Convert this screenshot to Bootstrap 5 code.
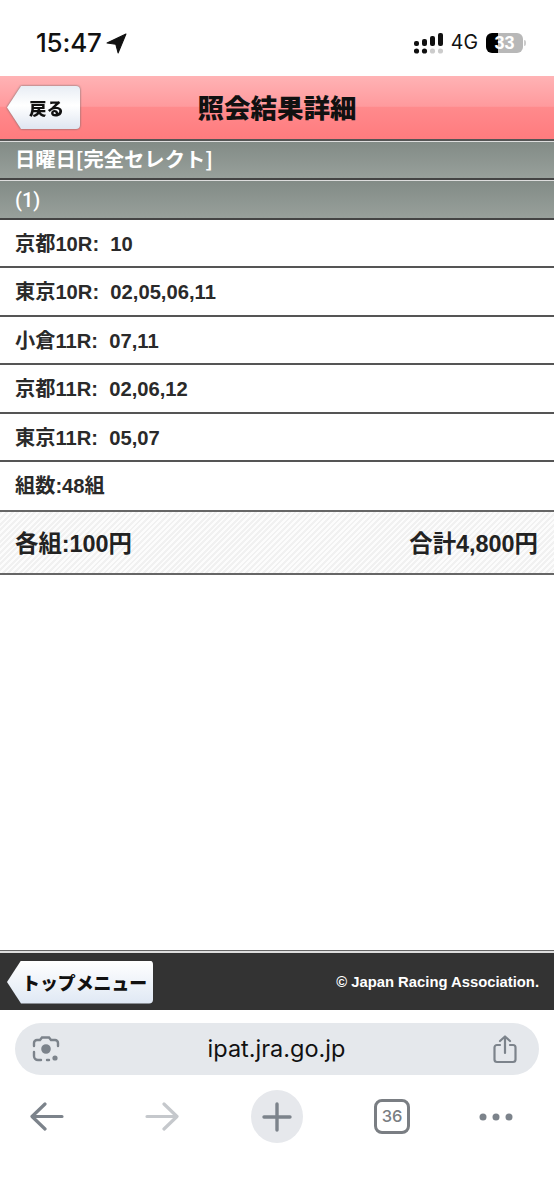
<!DOCTYPE html>
<html lang="ja"><head><meta charset="utf-8">
<link href="https://cdn.jsdelivr.net/npm/bootstrap@5.3.0/dist/css/bootstrap.min.css" rel="stylesheet">
<style>
html,body{height:1200px;overflow:hidden}
body{background:#fff;font-family:"Liberation Sans","Noto Sans CJK JP",sans-serif;color:#222}
.page-wrap{height:1200px}
.status-bar{height:76px;padding:24px 28px 0 36px;color:#111}
.clock{font:500 26px/38px Inter,"Liberation Sans",sans-serif;letter-spacing:-.2px}
.net{font:400 19.500px/1 Inter,"Liberation Sans",sans-serif;margin:0 8px}
.batt{width:37px;height:20px;border-radius:6px;background:linear-gradient(90deg,#000 32%,#b8b8b8 32%);color:#fff;font:700 18px/20px "Liberation Sans",sans-serif;text-align:center}
.batt-tip{width:2px;height:6px;background:#ccc;border-radius:0 2px 2px 0;margin-left:1px}
.red-head{height:65px;background:linear-gradient(#ffb3b5 0,#ff9a9d 48%,#ff8a8c 50%,#ff7b7e 100%);border-bottom:2px solid #555;padding-left:7px}
.head-title{font:900 26.500px/1 "Noto Sans CJK JP",sans-serif;color:#111;left:0;right:0;top:18px;text-align:center}
.head-back{filter:drop-shadow(0 0 1px #666)}
.head-back-in{width:73px;height:43px;background:linear-gradient(#e8edf4,#fff 45%,#dfe6f1);clip-path:path("M14 0H69a4 4 0 0 1 4 4V39a4 4 0 0 1-4 4H14L0 21.500Z");font:900 17.500px/43px "Noto Sans CJK JP",sans-serif;color:#111;padding-left:6px;text-align:center}
.band{height:39px;background:linear-gradient(#828b86,#98a09b);border-top:1px solid #ddd;border-bottom:2px solid #444;color:#fff;font:700 20.300px/33px "Noto Sans CJK JP","Liberation Sans",sans-serif;padding-left:15px}
.band-num{height:40px;line-height:38px;font-family:Roboto,"Liberation Sans",sans-serif;font-weight:500;font-size:20px}
.data-list .list-group-item{height:48.400px;border:0;border-bottom:2px solid #555;padding:0 15px;font:700 20.200px/48px "Liberation Sans","Noto Sans CJK JP",sans-serif;color:#2a2a2a;border-radius:0;margin:0}
.data-list .list-group-item:last-child{border-bottom:0;line-height:48px}
.sum-bar{height:65px;border-top:2px solid #666;border-bottom:2px solid #666;padding:3px 16px 0 15px;font:700 23.400px/1 "Liberation Sans","Noto Sans CJK JP",sans-serif;color:#222;background-color:#fafafa;background-image:repeating-linear-gradient(135deg,#f1f1f1 0 2px,#fcfcfc 2px 4px)}
.foot-bar{height:60px;background:#333;border-top:1px solid #666;box-shadow:inset 0 2px 0 #ddd;padding:3px 15px 0 7px;color:#fff;font:700 14.800px/1 "Liberation Sans",sans-serif}
.foot-top{width:146px;height:43px;background:linear-gradient(#fff,#dfe8f4);clip-path:path("M14 0H142a4 4 0 0 1 4 4V39a4 4 0 0 1-4 4H14L0 21.500Z");font:900 17.900px/43px "Noto Sans CJK JP",sans-serif;color:#111;padding-left:15px;white-space:nowrap;text-align:left}
.addr-bar{height:52px;margin:13px 15px 0;border-radius:26px;background:#e5e8ec;padding:0 22px 0 17px;font:400 23.500px/1 Inter,"Liberation Sans",sans-serif;color:#111}
.tool-row{height:125px;padding-top:15px}
.tool-in{height:53px}
.t-back{margin-left:30px}
.t-fwd{margin-left:81px}
.t-plus{margin-left:72px}
.t-tab{margin-left:71px}
.t-more{margin-left:69px}
.plus-wrap{width:52px;height:53px;border-radius:50%;background:#e6e8ec}
.tab-count{width:36px;height:35px;border:3.500px solid #7a7e83;border-radius:8px;font:500 16.500px/1 Inter,"Liberation Sans",sans-serif;color:#7a7e83}
</style></head>
<body>
<div class="page-wrap d-flex flex-column">
  <div class="status-bar d-flex justify-content-between align-items-start">
    <div class="d-flex align-items-center gap-1"><span class="clock">15:47</span>
      <svg width="21" height="21" viewBox="0 0 20 20"><path d="M19 1 1 9.500l8.300 1.200L11.500 19z" fill="#111" stroke="#111" stroke-linejoin="round"/></svg></div>
    <div class="d-flex align-items-center" style="height:38px">
      <svg width="29" height="21" viewBox="0 0 29 21" fill="#111"><rect x="0" y="8" width="5" height="5" rx="2"/><rect x="8" y="6" width="5" height="7" rx="2"/><rect x="16" y="3" width="5" height="10" rx="2"/><rect x="24" y="0" width="5" height="13" rx="2"/><circle cx="2.500" cy="18" r="2.600"/><circle cx="10.500" cy="18" r="2.600"/><circle cx="18.500" cy="18" r="2.600" fill="#ccc"/><circle cx="26.500" cy="18" r="2.600" fill="#ccc"/></svg>
      <span class="net">4G</span>
      <div class="batt">33</div><div class="batt-tip"></div>
    </div>
  </div>
  <div class="red-head position-relative d-flex align-items-center">
    <div class="head-back"><div class="head-back-in">戻る</div></div>
    <div class="head-title position-absolute">照会結果詳細</div>
  </div>
  <div class="band">日曜日[完全セレクト]</div>
  <div class="band band-num">(1)</div>
  <ul class="list-group data-list">
    <li class="list-group-item">京都10R:&nbsp; 10</li>
    <li class="list-group-item">東京10R:&nbsp; 02,05,06,11</li>
    <li class="list-group-item">小倉11R:&nbsp; 07,11</li>
    <li class="list-group-item">京都11R:&nbsp; 02,06,12</li>
    <li class="list-group-item">東京11R:&nbsp; 05,07</li>
    <li class="list-group-item">組数:48組</li>
  </ul>
  <div class="sum-bar d-flex justify-content-between align-items-center"><span>各組:100円</span><span>合計4,800円</span></div>
  <div class="flex-grow-1"></div>
  <div class="foot-bar d-flex justify-content-between align-items-center">
    <div class="foot-top">トップメニュー</div>
    <span>© Japan Racing Association.</span>
  </div>
  <div class="addr-bar d-flex justify-content-between align-items-center">
    <svg width="28" height="28" viewBox="0 0 28 28" fill="none" stroke="#7c838b" stroke-width="2.400" stroke-linecap="round"><path d="M2 11V8a3 3 0 0 1 3-3h3l2-2.500h7L19 5h4a3 3 0 0 1 3 3v3"/><path d="M2 17v4a4 4 0 0 0 4 4h3M15 25h2"/><circle cx="14" cy="14" r="3.600" fill="#7c838b"/><circle cx="23" cy="23" r="2.600" fill="#7c838b" stroke="none"/></svg>
    <span>ipat.jra.go.jp</span>
    <svg width="24" height="29" viewBox="0 0 24 29" fill="none" stroke="#7c838b" stroke-width="2.200" stroke-linecap="round" stroke-linejoin="round"><path d="M7 10H4a2.500 2.500 0 0 0-2.500 2.500v12A2.500 2.500 0 0 0 4 27h16a2.500 2.500 0 0 0 2.500-2.500v-12A2.500 2.500 0 0 0 20 10h-3"/><path d="M12 18V2M7 6l5-4.500L17 6"/></svg>
  </div>
  <div class="tool-row">
    <div class="tool-in d-flex align-items-center">
    <svg class="t-back" width="34" height="30" viewBox="0 0 34 30" fill="none" stroke="#7c838b" stroke-width="3.200" stroke-linecap="round" stroke-linejoin="round"><path d="M32 14.500H3M15 2 2 14.500 15 27"/></svg>
    <svg class="t-fwd" width="34" height="30" viewBox="0 0 34 30" fill="none" stroke="#c5c8cc" stroke-width="3.200" stroke-linecap="round" stroke-linejoin="round"><path d="M2 14.500h29M19 2l13 12.500L19 27"/></svg>
    <div class="plus-wrap t-plus d-flex align-items-center justify-content-center">
      <svg width="30" height="30" viewBox="0 0 30 30" stroke="#7c838b" stroke-width="3.400" stroke-linecap="round"><path d="M15 2v26M2 15h26"/></svg>
    </div>
    <div class="tab-count t-tab d-flex align-items-center justify-content-center">36</div>
    <svg class="t-more" width="34" height="10" viewBox="0 0 34 10" fill="#7c838b"><circle cx="4" cy="5" r="3.500"/><circle cx="17" cy="5" r="3.500"/><circle cx="30" cy="5" r="3.500"/></svg>
    </div>
  </div>
</div>
<script src="https://cdn.jsdelivr.net/npm/bootstrap@5.3.0/dist/js/bootstrap.bundle.min.js"></script>
</body></html>
